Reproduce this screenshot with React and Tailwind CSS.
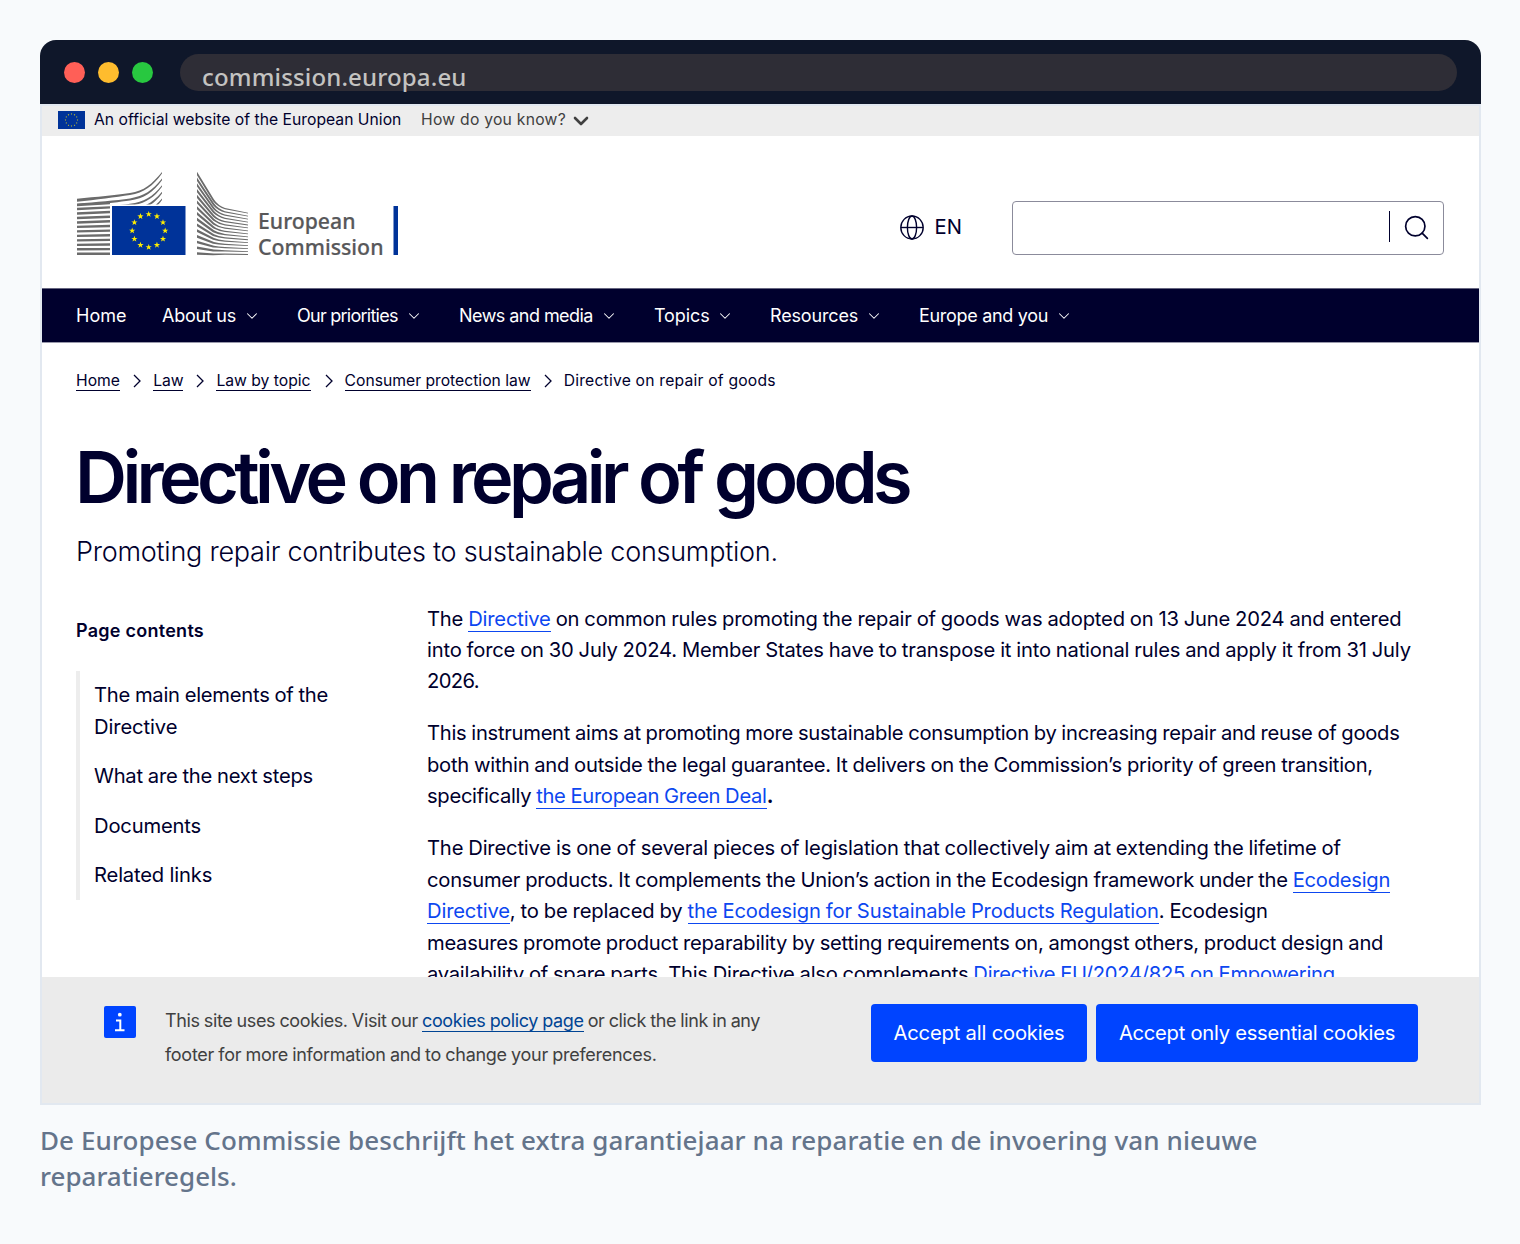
import { Search, ChevronDown } from "lucide-react";

const NAV_ITEMS = [
	{ label: "Home", style: "w-[50px]" },
	{ label: "About us", style: "w-[74px] tracking-[-0.25px]", menu: true },
	{ label: "Our priorities", style: "w-[101px] tracking-[-0.75px]", menu: true },
	{ label: "News and media", style: "w-[134px] tracking-[-0.55px]", menu: true },
	{ label: "Topics", style: "w-[55px] tracking-[-0.1px]", menu: true },
	{ label: "Resources", style: "w-[88px] tracking-[-0.15px]", menu: true },
	{ label: "Europe and you", style: "w-[129px] tracking-[-0.3px]", menu: true },
];

const CRUMBS = [
	{ label: "Home", width: "w-[44px]" },
	{ label: "Law", width: "w-[30px]" },
	{ label: "Law by topic", width: "w-[95px]" },
	{ label: "Consumer protection law", width: "w-[186px]" },
];

const STARS = Array.from({ length: 12 }, (_, i) => i * 30);

// Five pointed star centred on 0,0
const STAR_POINTS = "0,-3 0.7,-0.95 2.85,-0.93 1.13,0.37 1.76,2.43 0,1.2 -1.76,2.43 -1.13,0.37 -2.85,-0.93 -0.7,-0.95";

function StarRing({ cx, cy, r, scale }) {
	return STARS.map((deg) => {
		const a = (deg * Math.PI) / 180;
		return (
			<polygon
				key={deg}
				points={STAR_POINTS}
				fill="#ffed00"
				transform={`translate(${cx + r * Math.sin(a)} ${cy - r * Math.cos(a)}) scale(${scale})`}
			/>
		);
	});
}

// Upper sweeps of the building, thick at the left and thin at the tip
function sweep(k) {
	const l = 27.7 + k * 4.9;
	const m = 22 + k * 5.4;
	const r = 1 + k * 6.6;
	return `M1 ${l}C20 ${l - 1.8} 40 ${m + 2} 54 ${m}C68 ${m - 2} 76 ${r + 12} 86 ${r}V${r + 1.6}C77 ${r + 14} 68 ${m} 54 ${m + 2}C40 ${m + 4} 20 ${l + 1.2} 1 ${l + 3}Z`;
}

// Lines of the right wing, from the steep top one to the flat bottom one
function fan(i) {
	const f = 1 - i / 14;
	const l = 0.8 + i * 5.75;
	const m = 35 + i * 3.39;
	const r = 41.8 + i * 2.95;
	const t = 2.4 + f;
	return `M121 ${l}L138 ${m - 6.5 * f}Q142 ${m - 0.5 * f} 149 ${m + 2 * f}L172 ${r}V${r + 0.8}L149 ${m + 2 * f + 1.2}Q142 ${m + 1.3} 137 ${m - 6.5 * f + 1.8}L121 ${l + t}Z`;
}

function CommissionLogo() {
	const bars = Array.from({ length: 11 }, (_, i) => i);
	const wing = Array.from({ length: 15 }, (_, i) => i);
	return (
		<svg width="324" height="90" viewBox="0 0 324 90" className="shrink-0" aria-label="European Commission">
			<clipPath id="roof">
				<rect width="90" height="33.500" />
			</clipPath>
			<g fill="#6b6b6b" clipPath="url(#roof)">
				{[0, 1, 2, 3, 4].map((k) => (
					<path key={k} d={sweep(k)} />
				))}
			</g>
			<path d="M1 33L34 31V33.300L1 35.300Z" fill="#6b6b6b" />
			<g fill="none" stroke="#6b6b6b" strokeWidth="2.4">
				{bars.map((i) => (
					<path key={i} d={`M1 ${38 + i * 4.48}L34 ${38 + i * 4.48 - (10 - i) * 0.16}`} />
				))}
			</g>
			<g fill="#6b6b6b">
				{wing.map((i) => (
					<path key={i} d={fan(i)} />
				))}
			</g>
			<rect x="36" y="35" width="73.500" height="49" fill="#039" />
			<StarRing cx={72.7} cy={59.7} r={16.5} scale={1.1} />
			<text x="182" y="58" fontSize="22" fontWeight="500" fill="#58585a" stroke="#58585a" strokeWidth="0.200" fontFamily="Noto Sans, sans-serif" textLength="97.500" lengthAdjust="spacingAndGlyphs">European</text>
			<text x="182" y="83.500" fontSize="22" fontWeight="500" fill="#58585a" stroke="#58585a" strokeWidth="0.200" fontFamily="Noto Sans, sans-serif" textLength="125.500" lengthAdjust="spacingAndGlyphs">Commission</text>
			<rect x="317.500" y="35" width="4.500" height="49" fill="#039" />
		</svg>
	);
}

function Globe() {
	return (
		<svg width="24" height="26" viewBox="0 0 24 26" fill="none" stroke="#00002d" strokeWidth="1.4">
			<ellipse cx="12" cy="13.500" rx="11.200" ry="11.500" />
			<ellipse cx="12" cy="13.500" rx="4.600" ry="11.500" />
			<path d="M1 13.500H23" />
		</svg>
	);
}

function Link({ children }) {
	return <a className="border-b border-[#0d47f0] text-[#0d47f0]">{children}</a>;
}

function Line({ children, spacing = "" }) {
	return <span className={`block w-max whitespace-nowrap ${spacing}`}>{children}</span>;
}

export default function App() {
	return (
		<div className="h-[1244px] w-[1520px] bg-[#f8fafc] pt-10 pl-10 font-['Inter',sans-serif]">
			<div className="w-[1441px]">
				<div className="flex h-16 items-center rounded-t-2xl bg-[#0f172a] pr-6 pl-6">
					<div className="flex gap-[13px]">
						<i className="size-[21px] rounded-full bg-[#ff5f57]" />
						<i className="size-[21px] rounded-full bg-[#febc2e]" />
						<i className="size-[21px] rounded-full bg-[#28c840]" />
					</div>
					<div className="ml-[27px] h-[37px] grow rounded-full bg-[#2e2d36] pl-[22px] font-['Noto_Sans',sans-serif] text-[24px] leading-[46px] font-medium tracking-[0.15px] text-[#c4c3c1]">
						<span>commission.europa.eu</span>
					</div>
				</div>

				<div className="flex h-[1001px] flex-col overflow-hidden border-2 border-[#e2e8f0] bg-white text-[#00002d]">
					<div className="flex h-[30px] shrink-0 items-center bg-[#ededed] pb-[3px] pl-4 text-[15.700px]">
						<svg width="27" height="18" viewBox="0 0 27 18">
							<rect width="27" height="18" fill="#039" />
							<StarRing cx={13.5} cy={9} r={6} scale={0.3} />
						</svg>
						<span className="ml-[9px] w-[327px] tracking-[0.020px] whitespace-nowrap">An official website of the European Union</span>
						<span className="w-[148px] tracking-[0.25px] whitespace-nowrap text-[#404040]">How do you know?</span>
						<ChevronDown size={24} strokeWidth={2.6} color="#404040" className="mt-[2px]" />
					</div>

					<header className="flex h-[153px] shrink-0 border-b border-[#666680] pl-[34px]">
						<div className="mt-[35px] w-[824px]">
							<CommissionLogo />
						</div>
						<div className="mt-[78px] flex h-[26px] w-[112px] items-center gap-[10.500px] text-[20.200px]">
							<Globe />
							<span>EN</span>
						</div>
						<div className="mt-[65px] flex h-[54px] w-[432px] items-center justify-end rounded border border-[#8b8b9b]">
							<i className="mb-[3px] h-[31px] w-px bg-[#00002d]" />
							<Search size={29} strokeWidth={1.4} className="mr-[12px] mb-[1px] ml-[12px]" />
						</div>
					</header>

					<nav className="flex h-[54px] shrink-0 items-center border-b border-[#9999ab] bg-[#00002d] pl-[34px] text-[18px] text-white">
						{NAV_ITEMS.map((item) => (
							<div key={item.label} className="mr-9 flex items-center">
								<span className={`whitespace-nowrap ${item.style}`}>{item.label}</span>
								{item.menu && <ChevronDown size={18} strokeWidth={1.4} className="mr-[0.500px] ml-[6.500px]" />}
							</div>
						))}
					</nav>

					<div className="mt-[29px] flex h-[19px] shrink-0 items-center pl-[34px] text-[15.700px]">
						{CRUMBS.map((c) => (
							<div key={c.label} className="flex items-center">
								<a className={`h-[19px] border-b border-[#00002d] leading-[18px] whitespace-nowrap ${c.width}`}>{c.label}</a>
								<svg width="9" height="14" viewBox="0 0 9 14" fill="none" stroke="#00002d" strokeWidth="1.3" className="mr-[11px] mb-[2px] ml-[13.200px]">
									<path d="M1 1L7 7L1 13" />
								</svg>
							</div>
						))}
						<span className="h-[19px] leading-[18px] tracking-[0.2px] whitespace-nowrap">Directive on repair of goods</span>
					</div>

					<h1 className="mt-[41px] ml-[33px] h-[90px] w-max shrink-0 text-[72px] leading-[90px] font-semibold tracking-[-4.620px] [word-spacing:-0.300px]">Directive on repair of goods</h1>
					<p className="mt-[12px] ml-[34px] h-[36px] w-max shrink-0 text-[27px] leading-[36px] font-light tracking-[-0.250px]">Promoting repair contributes to sustainable consumption.</p>

					<div className="flex h-[407px] shrink-0 overflow-hidden pl-[34px] text-[20.200px] leading-[31.450px]">
						<aside className="w-[351px]">
							<h2 className="mt-[45px] text-[18px] leading-[32px] font-semibold tracking-[0.260px]"><span>Page contents</span></h2>
							<ul className="mt-[24px] flex h-[229px] flex-col gap-[18px] border-l-4 border-[#ededed] pt-[8.300px] pl-[14px]">
								<li>
									<Line spacing="tracking-[-0.250px] [word-spacing:-0.500px]">The main elements of the</Line>
									<Line spacing="tracking-[-0.100px]">Directive</Line>
								</li>
								<li><Line spacing="tracking-[-0.230px] [word-spacing:-0.500px]">What are the next steps</Line></li>
								<li><Line spacing="tracking-[-0.180px]">Documents</Line></li>
								<li><Line spacing="tracking-[-0.170px]">Related links</Line></li>
							</ul>
						</aside>
						<article className="mt-[32.500px] flex flex-col gap-[20.500px] [word-spacing:-0.500px]">
							<p>
								<Line spacing="tracking-[-0.190px]">The <Link>Directive</Link> on common rules promoting the repair of goods was adopted on 13 June 2024 and entered</Line>
								<Line spacing="tracking-[-0.190px]">into force on 30 July 2024. Member States have to transpose it into national rules and apply it from 31 July</Line>
								<Line spacing="tracking-[-0.600px]">2026.</Line>
							</p>
							<p>
								<Line spacing="tracking-[-0.280px]">This instrument aims at promoting more sustainable consumption by increasing repair and reuse of goods</Line>
								<Line spacing="tracking-[-0.240px]">both within and outside the legal guarantee. It delivers on the Commission’s priority of green transition,</Line>
								<Line spacing="tracking-[-0.300px]">specifically <Link>the European Green Deal</Link><b>.</b></Line>
							</p>
							<p>
								<Line spacing="tracking-[-0.170px]">The Directive is one of several pieces of legislation that collectively aim at extending the lifetime of</Line>
								<Line spacing="tracking-[-0.250px]">consumer products. It complements the Union’s action in the Ecodesign framework under the <Link>Ecodesign</Link></Line>
								<Line spacing="tracking-[-0.160px]"><Link>Directive</Link>, to be replaced by <Link>the Ecodesign for Sustainable Products Regulation</Link>. Ecodesign</Line>
								<Line spacing="tracking-[-0.265px]">measures promote product reparability by setting requirements on, amongst others, product design and</Line>
								<Line spacing="tracking-[-0.255px]">availability of spare parts. This Directive also complements <Link>Directive EU/2024/825 on Empowering</Link></Line>
							</p>
						</article>
					</div>

					<footer className="flex grow items-start bg-[#ebebeb] pl-[62px] text-[#404040]">
						<svg width="32" height="32" viewBox="0 0 32 32" className="mt-[29px]">
							<rect width="32" height="32" rx="2" fill="#04f" />
							<circle cx="15.800" cy="8.700" r="1.900" fill="#fff" />
							<path d="M12 14.500H16.300V24M11 24.200H20.500" fill="none" stroke="#fff" strokeWidth="2" />
						</svg>
						<p className="mt-[27px] ml-[29px] w-[706px] text-[18px] leading-[33.700px] [word-spacing:-0.500px]">
							<Line spacing="tracking-[-0.375px]">This site uses cookies. Visit our <a className="border-b border-[#004494] text-[#004494]">cookies policy page</a> or click the link in any</Line>
							<Line spacing="tracking-[-0.280px]">footer for more information and to change your preferences.</Line>
						</p>
						<button className="mt-[27px] h-[58px] w-[216px] rounded bg-[#04f] text-[20.200px] tracking-[-0.190px] text-white"><span>Accept all cookies</span></button>
						<button className="mt-[27px] ml-[9px] h-[58px] w-[322px] rounded bg-[#04f] text-[20.200px] tracking-[-0.260px] text-white"><span>Accept only essential cookies</span></button>
					</footer>
				</div>
			</div>
			<p className="mt-[17px] font-['Noto_Sans',sans-serif] text-[26px] leading-[36px] font-medium text-[#64748b]">
				<Line spacing="tracking-[0.095px]">De Europese Commissie beschrijft het extra garantiejaar na reparatie en de invoering van nieuwe</Line>
				<Line>reparatieregels.</Line>
			</p>
		</div>
	);
}
